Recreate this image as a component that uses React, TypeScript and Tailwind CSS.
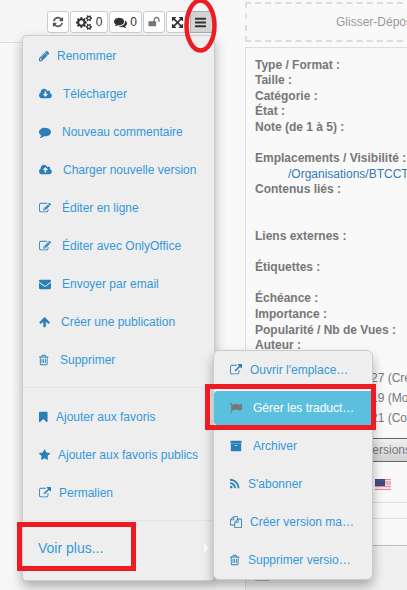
import React from "react";

const CLOUD =
  "zm640 288q0 159-112.5 271.5t-271.5 112.5h-1088q-185 0-316.5-131.5t-131.5-316.5q0-130 70-240t188-165q-2-30-2-43 0-212 150-362t362-150q156 0 285.5 87t188.5 231q71-62 166-62 106 0 181 75t75 181q0 76-41 138 130 31 213.5 135.5t83.5 238.5z";

const SMALL_COG =
  "v140q0 16-149 31-12 27-30 52 51 113 51 138 0 4-4 7-122 71-124 71-8 0-46-47t-52-68q-20 2-30 2t-30-2q-14 21-52 68t-46 47q-2 0-124-71-4-3-4-7 0-25 51-138-18-25-30-52-149-15-149-31v-140q0-16 149-31 13-29 30-52-51-113-51-138 0-4 4-7 4-2 35-20t59-34 30-16q8 0 46 46.5t52 67.5q20-2 30-2t30 2q51-71 92-112l6-2q4 0 124 70 4 3 4 7 0 25-51 138 17 23 30 52 149 15 149 31z";

const PATHS = {
  cogs:
    "M896 896q0-106-75-181t-181-75-181 75-75 181 75 181 181 75 181-75 75-181zm768 512q0-52-38-90t-90-38-90 38-38 90q0 53 37.5 90.5t90.5 37.5 90.5-37.5 37.5-90.5zm0-1024q0-52-38-90t-90-38-90 38-38 90q0 53 37.5 90.5t90.5 37.5 90.5-37.5 37.5-90.5zm-384 421v185q0 10-7 19.5t-16 10.5l-155 24q-11 35-32 76 34 48 90 115 7 11 7 20 0 12-7 19-23 30-82.5 89.5t-78.5 59.5q-11 0-21-7l-115-90q-37 19-77 31-11 108-23 155-7 24-30 24h-186q-11 0-20-7.5t-10-17.5l-23-153q-34-10-75-31l-118 89q-7 7-20 7-11 0-21-8-144-133-144-160 0-9 7-19 10-14 41-53t47-61q-23-44-35-82l-152-24q-10-1-17-9.5t-7-19.5v-185q0-10 7-19.5t16-10.5l155-24q11-35 32-76-34-48-90-115-7-11-7-20 0-12 7-20 22-30 82-89t79-59q11 0 21 7l115 90q34-18 77-32 11-108 23-154 7-24 30-24h186q11 0 20 7.5t10 17.5l23 153q34 10 75 31l118-89q8-7 20-7 11 0 21 8 144 133 144 160 0 8-7 19-12 16-42 54t-45 60q23 48 34 82l152 23q10 2 17 10.5t7 19.5zM1920 1338" +
    SMALL_COG +
    "M1920 314" +
    SMALL_COG,
  pencil:
    "M491 1536l91-91-235-235-91 91v107h128v128h107zm523-928q0-22-22-22-10 0-17 7l-542 542q-7 7-7 17 0 22 22 22 10 0 17-7l542-542q7-7 7-17zm-54-192l416 416-832 832h-416v-416zm683 96q0 53-37 90l-166 166-416-416 166-165q36-38 90-38 53 0 91 38l235 234q37 39 37 91z",
  download:
    "M1280 928q0-14-9-23t-23-9h-224v-352q0-13-9.5-22.5t-22.5-9.5h-192q-13 0-22.5 9.5t-9.5 22.5v352h-224q-13 0-22.5 9.5t-9.5 22.5q0 14 9 23l352 352q9 9 23 9t23-9l351-351q10-12 10-24zM1216 864" +
    CLOUD,
  upload:
    "M1280 864q0-14-9-23l-352-352q-9-9-23-9t-23 9l-351 351q-10 12-10 24 0 14 9 23t23 9h224v352q0 13 9.5 22.5t22.5 9.5h192q13 0 22.5-9.5t9.5-22.5v-352h224q13 0 22.5-9.5t9.5-22.5zM1216 864" +
    CLOUD,
  comment:
    "M1792 896q0 174-120 321.5t-326 233-450 85.5q-70 0-145-8-198 175-460 242-49 14-114 22-17 2-30.5-9t-17.5-29v-1q-3-4-.5-12t2-10 4.5-9.5l6-9 7-8.5 8-9q7-8 31-34.5t34.5-38 31-39.5 32.5-51 27-59 26-76q-157-89-247.5-220t-90.5-281q0-130 71-248.5t191-204.5 286-136.5 348-50.5q244 0 450 85.5t326 233 120 321.5z",
  edit: "M888 1184l116-116-152-152-116 116v56h96v96h56zm440-720q-16-16-33 1l-350 350q-17 17-1 33t33-1l350-350q17-17 1-33zm80 594v190q0 119-84.5 203.5t-203.5 84.5h-832q-119 0-203.5-84.5t-84.5-203.5v-832q0-119 84.5-203.5t203.5-84.5h832q63 0 117 25 15 7 18 23 3 17-9 29l-49 49q-14 14-32 8-23-6-45-6h-832q-66 0-113 47t-47 113v832q0 66 47 113t113 47h832q66 0 113-47t47-113v-126q0-13 9-22l64-64q15-15 35-7t20 29zm-96-738l288 288-672 672h-288v-288zm444 132l-92 92-288-288 92-92q28-28 68-28t68 28l152 152q28 28 28 68t-28 68z",
  envelope:
    "M1792 710v794q0 66-47 113t-113 47h-1472q-66 0-113-47t-47-113v-794q44 49 101 87 362 246 497 345 57 42 92.5 65.5t94.5 48 110 24.5h2q51 0 110-24.5t94.5-48 92.5-65.5q170-123 498-345 57-39 100-87zm0-294q0 79-49 151t-122 123q-376 261-468 325-10 7-42.5 30.5t-54 38-52 32.5-57.5 27-50 9h-2q-23 0-50-9t-57.5-27-52-32.5-54-38-42.5-30.5q-91-64-262-182.5t-205-142.5q-62-42-117-115.5t-55-136.5q0-78 41.5-130t118.5-52h1472q65 0 112.5 47t47.5 113z",
  up: "M1675 971q0 51-37 90l-75 75q-38 38-91 38-54 0-90-38l-294-293v704q0 52-37.5 84.5t-90.5 32.5h-128q-53 0-90.5-32.5t-37.5-84.5v-704l-294 293q-36 38-90 38t-90-38l-75-75q-38-38-38-90 0-53 38-91l651-651q35-37 90-37 54 0 91 37l651 651q37 39 37 91z",
  trash:
    "M704 736v576q0 14-9 23t-23 9h-64q-14 0-23-9t-9-23v-576q0-14 9-23t23-9h64q14 0 23 9t9 23zm256 0v576q0 14-9 23t-23 9h-64q-14 0-23-9t-9-23v-576q0-14 9-23t23-9h64q14 0 23 9t9 23zm256 0v576q0 14-9 23t-23 9h-64q-14 0-23-9t-9-23v-576q0-14 9-23t23-9h64q14 0 23 9t9 23zm128 724v-948h-896v948q0 22 7 40.5t14.5 27 10.5 8.5h832q3 0 10.5-8.5t14.5-27 7-40.5zm-672-1076h448l-48-117q-7-9-17-11h-317q-10 2-17 11zm928 32v64q0 14-9 23t-23 9h-96v948q0 83-47 143.5t-113 60.5h-832q-66 0-113-58.5t-47-141.5v-952h-96q-14 0-23-9t-9-23v-64q0-14 9-23t23-9h309l70-167q15-37 54-63t79-26h320q40 0 79 26t54 63l70 167h309q14 0 23 9t9 23z",
  bookmark:
    "M1420 128q23 0 44 9 33 13 52.5 41t19.5 62v1289q0 34-19.5 62t-52.5 41q-19 8-44 8-48 0-83-32l-441-424-441 424q-36 33-83 33-23 0-44-9-33-13-52.5-41t-19.5-62v-1289q0-34 19.5-62t52.5-41q21-9 44-9h1048z",
  star: "M1728 647q0 22-26 48l-363 354 86 500q1 7 1 20 0 21-10.5 35.5t-30.5 14.5q-19 0-40-12l-449-236-449 236q-22 12-40 12-21 0-31.5-14.5t-10.5-35.5q0-6 2-20l86-500-364-354q-25-27-25-48 0-37 56-46l502-73 225-455q19-41 49-41t49 41l225 455 502 73q56 9 56 46z",
  external:
    "M1408 928v320q0 119-84.5 203.5t-203.5 84.5h-832q-119 0-203.5-84.5t-84.5-203.5v-832q0-119 84.5-203.5t203.5-84.5h704q14 0 23 9t9 23v64q0 14-9 23t-23 9h-704q-66 0-113 47t-47 113v832q0 66 47 113t113 47h832q66 0 113-47t47-113v-320q0-14 9-23t23-9h64q14 0 23 9t9 23zm384-864v512q0 26-19 45t-45 19-45-19l-176-176-652 652q-10 10-23 10t-23-10l-114-114q-10-10-10-23t10-23l652-652-176-176q-19-19-19-45t19-45 45-19h512q26 0 45 19t19 45z",
  flag: "M320 256q0 72-64 110v1266q0 13-9.5 22.5t-22.5 9.5h-64q-13 0-22.5-9.5t-9.5-22.5v-1266q-64-38-64-110 0-53 37.5-90.5t90.5-37.5 90.5 37.5 37.5 90.5zm1472 64v763q0 25-12.5 38.5t-39.5 27.5q-215 116-369 116-61 0-123.5-22t-108.5-48-115.5-48-142.5-22q-192 0-464 146-17 9-33 9-26 0-45-19t-19-45v-742q0-32 31-55 21-14 79-43 236-120 421-120 107 0 200 29t219 88q38 19 88 19 54 0 117.5-21t110-47 88-47 54.5-21q26 0 45 19t19 45z",
  archive:
    "M1088 832q0-26-19-45t-45-19h-256q-26 0-45 19t-19 45 19 45 45 19h256q26 0 45-19t19-45zm576-192v960q0 26-19 45t-45 19h-1408q-26 0-45-19t-19-45v-960q0-26 19-45t45-19h1408q26 0 45 19t19 45zm64-448v256q0 26-19 45t-45 19h-1536q-26 0-45-19t-19-45v-256q0-26 19-45t45-19h1536q26 0 45 19t19 45z",
  rss: "M576 1344q0 80-56 136t-136 56-136-56-56-136 56-136 136-56 136 56 56 136zm512 123q2 28-17 48-18 21-47 21h-135q-25 0-43-16.5t-20-41.5q-22-229-184.5-391.5t-391.5-184.5q-25-2-41.5-20t-16.5-43v-135q0-29 21-47 17-17 43-17h5q160 13 306 80.5t259 181.5q114 113 181.5 259t80.5 306zm512 2q2 27-18 47-18 20-46 20h-143q-26 0-44.5-17.5t-19.5-42.5q-12-215-101-408.5t-231.5-336-336-231.5-408.5-102q-25-1-42.5-19.5t-17.5-43.5v-143q0-28 20-46 18-18 44-18h3q262 13 501.5 120t425.5 294q187 186 294 425.5t120 501.5z",
  files:
    "M1696 384q40 0 68 28t28 68v1216q0 40-28 68t-68 28h-960q-40 0-68-28t-28-68v-288h-544q-40 0-68-28t-28-68v-672q0-40 20-88t48-76l408-408q28-28 76-48t88-20h416q40 0 68 28t28 68v328q68-40 128-40h416zm-544 213l-299 299h299v-299zm-640-384l-299 299h299v-299zm196 647l316-316v-416h-384v416q0 40-28 68t-68 28h-416v640h512v-256q0-40 20-88t48-76zm956 804v-1152h-384v416q0 40-28 68t-68 28h-416v640h896z",
  refresh:
    "M1639 1056q0 5-1 7-64 268-268 434.5t-478 166.5q-146 0-282.5-55t-243.5-157l-129 129q-19 19-45 19t-45-19-19-45v-448q0-26 19-45t45-19h448q26 0 45 19t19 45-19 45l-137 137q71 66 161 102t187 36q134 0 250-65t186-179q11-17 53-117 8-23 30-23h192q13 0 22.5 9.5t9.5 22.5zm25-800v448q0 26-19 45t-45 19h-448q-26 0-45-19t-19-45 19-45l138-138q-148-137-349-137-134 0-250 65t-186 179q-11 17-53 117-8 23-30 23h-199q-13 0-22.5-9.5t-9.5-22.5v-7q65-268 270-434.5t480-166.5q146 0 284 55.5t245 156.5l130-129q19-19 45-19t45 19 19 45z",
  comments:
    "M1408 768q0 139-94 257t-256.5 186.5-353.5 68.5q-86 0-176-16-124 88-278 128-36 9-86 16h-3q-11 0-20.5-8t-11.5-21q-1-3-1-6.5t.5-6.5 2-6l2.5-5 3.5-5.5 4-5 4.5-5 4-4.5q5-6 23-25t26-29.5 22.5-29 25-38.5 20.5-44q-124-72-195-177t-71-224q0-139 94-257t256.5-186.5 353.5-68.5 353.5 68.5 256.5 186.5 94 257zm384 256q0 120-71 224.5t-195 176.5q10 24 20.5 44t25 38.5 22.5 29 26 29.5 23 25q1 1 4 4.5t4.5 5 4 5 3.5 5.5l2.5 5 2 6 .5 6.5-1 6.5q-3 14-13 22t-22 7q-50-7-86-16-154-40-278-128-90 16-176 16-271 0-472-132 58 4 88 4 161 0 309-45t264-129q125-92 192-212t67-254q0-77-23-152 129 71 204 178t75 230z",
  unlock:
    "M1728 576v256q0 26-19 45t-45 19h-64q-26 0-45-19t-19-45v-256q0-106-75-181t-181-75-181 75-75 181v192h96q40 0 68 28t28 68v576q0 40-28 68t-68 28h-960q-40 0-68-28t-28-68v-576q0-40 28-68t68-28h672v-192q0-185 131.5-316.5t316.5-131.5 316.5 131.5 131.5 316.5z",
  expand:
    "M1411 541l-355 355 355 355 144-144q29-31 70-14 39 17 39 59v448q0 26-19 45t-45 19h-448q-42 0-59-40-17-39 14-69l144-144-355-355-355 355 144 144q31 30 14 69-17 40-59 40h-448q-26 0-45-19t-19-45v-448q0-42 40-59 39-17 69 14l144 144 355-355-355-355-144 144q-19 19-45 19-12 0-24-5-40-17-40-59v-448q0-26 19-45t45-19h448q42 0 59 40 17 39-14 69l-144 144 355 355 355-355-144-144q-31-30-14-69 17-40 59-40h448q26 0 45 19t19 45v448q0 42-39 59-13 5-25 5-26 0-45-19z",
  bars: "M1664 1344v128q0 26-19 45t-45 19h-1408q-26 0-45-19t-19-45v-128q0-26 19-45t45-19h1408q26 0 45 19t19 45zm0-512v128q0 26-19 45t-45 19h-1408q-26 0-45-19t-19-45v-128q0-26 19-45t45-19h1408q26 0 45 19t19 45zm0-512v128q0 26-19 45t-45 19h-1408q-26 0-45-19t-19-45v-128q0-26 19-45t45-19h1408q26 0 45 19t19 45z",
};

type IconName = keyof typeof PATHS;

// Horizontal origin and width of each glyph inside the 1792-unit em box.
const BOXES: Partial<Record<IconName, [number, number]>> = {
  cogs: [0, 1920],
  pencil: [128, 1536],
  download: [-64, 1920],
  upload: [-64, 1920],
  up: [64, 1664],
  trash: [192, 1408],
  bookmark: [256, 1280],
  star: [64, 1664],
  rss: [192, 1408],
};

function Icon({ name, size = 12 }: { name: IconName; size?: number }) {
  const [x, w] = BOXES[name] ?? [0, 1792];
  return (
    <svg
      className="block shrink-0 overflow-visible"
      width={(w / 1792) * size}
      height={size}
      viewBox={`${x} 0 ${w} 1792`}
      fill="currentColor"
      fillRule={name === "download" || name === "upload" ? "evenodd" : "nonzero"}
    >
      <path d={PATHS[name]} />
    </svg>
  );
}

interface Entry {
  icon: IconName;
  label: string;
  slot: string;
}

const actions: Entry[] = [
  { icon: "pencil", label: "Renommer", slot: "w-[18px]" },
  { icon: "download", label: "Télécharger", slot: "w-6" },
  { icon: "comment", label: "Nouveau commentaire", slot: "w-[23px]" },
  { icon: "upload", label: "Charger nouvelle version", slot: "w-6" },
  { icon: "edit", label: "Éditer en ligne", slot: "w-[23px]" },
  { icon: "edit", label: "Éditer avec OnlyOffice", slot: "w-[23px]" },
  { icon: "envelope", label: "Envoyer par email", slot: "w-[23px]" },
  { icon: "up", label: "Créer une publication", slot: "w-[22px]" },
  { icon: "trash", label: "Supprimer", slot: "w-[21px]" },
];

const bookmarks: Entry[] = [
  { icon: "bookmark", label: "Ajouter aux favoris", slot: "w-[17px]" },
  { icon: "star", label: "Ajouter aux favoris publics", slot: "w-[19px]" },
  { icon: "external", label: "Permalien", slot: "w-5" },
];

const more: Entry[] = [
  { icon: "external", label: "Ouvrir l'emplace…", slot: "w-5" },
  { icon: "flag", label: "Gérer les traduct…", slot: "w-[23px]" },
  { icon: "archive", label: "Archiver", slot: "w-[23px]" },
  { icon: "rss", label: "S'abonner", slot: "w-[18px]" },
  { icon: "files", label: "Créer version ma…", slot: "w-5" },
  { icon: "trash", label: "Supprimer versio…", slot: "w-[18px]" },
];

function Menu({ entries, active }: { entries: Entry[]; active?: IconName }) {
  return (
    <ul className="flex flex-col gap-1 py-0.5">
      {entries.map(({ icon, label, slot }) => (
        <li
          key={label}
          className={
            icon === active
              ? "flex h-[34px] items-center rounded-l bg-[#5bc0de] pl-4 text-white"
              : "flex h-[34px] items-center pl-4 text-[#3498db]"
          }
        >
          <span className={`${slot} shrink-0 ${icon === active ? "text-[#777]" : "text-[#2980b9]"}`}>
            <Icon name={icon} />
          </span>
          <span className="whitespace-nowrap">{label}</span>
        </li>
      ))}
    </ul>
  );
}

const BTN = "flex h-[22px] items-center justify-center rounded-[3px] border border-[#ccc] bg-white";

function Toolbar() {
  return (
    <div className="flex h-[43px] gap-px border-b border-[#ddd] bg-[#f5f5f5] pt-[11px] pl-[47px] text-[#333]">
      <button className={`${BTN} w-[22px] text-[#555]`}>
        <Icon name="refresh" />
      </button>
      <button className={`${BTN} w-[38px] gap-1`}>
        <Icon name="cogs" size={15} />
        <span>0</span>
      </button>
      <button className={`${BTN} w-[33px] gap-[3px]`}>
        <Icon name="comments" size={13} />
        <span>0</span>
      </button>
      <button className={`${BTN} w-[22px] text-[#777]`}>
        <Icon name="unlock" />
      </button>
      <button className={`${BTN} w-[23px]`}>
        <Icon name="expand" size={13} />
      </button>
      <button className="flex h-[22px] w-6 items-center justify-center border border-[#adadad] bg-[#d4d4d4] pr-1">
        <Icon name="bars" size={13} />
      </button>
    </div>
  );
}

const fields = [
  "Type / Format :",
  "Taille :",
  "Catégorie :",
  "État :",
  "Note (de 1 à 5) :",
  "",
  "Emplacements / Visibilité :",
  "/Organisations/BTCCT",
  "Contenus liés :",
  "",
  "",
  "Liens externes :",
  "",
  "Étiquettes :",
  "",
  "Échéance :",
  "Importance :",
  "Popularité / Nb de Vues :",
  "Auteur :",
];

function UsFlag() {
  return (
    <svg width="16" height="11" viewBox="0 0 16 11" className="block">
      <rect width="16" height="11" fill="#f7dfe2" />
      <path d="M0 .5h16M0 3h16M0 5h16M0 7.5h16M0 10.5h16" stroke="#dd8c96" strokeWidth="1" />
      <rect width="10" height="7" fill="#3c4a7c" />
      <path d="M1 1.5h8M1 3.5h8M1 5.5h8" stroke="#5a6693" strokeWidth=".6" strokeDasharray="1 1" />
    </svg>
  );
}

function Details() {
  return (
    <section className="flex h-[590px] w-[162px] shrink-0 flex-col overflow-hidden text-[#777]">
      <div className="mt-0.5 flex h-10 w-[300px] shrink-0 items-center border-2 border-dashed border-[#ddd] pl-[89px] text-[#999]">
        Glisser-Dépos
      </div>
      <div className="mt-[5px] flex grow flex-col border-t border-l border-[#ddd]">
        <div className="h-[310px] shrink-0 pt-[9.5px] pl-[9px]">
          {fields.map((text, i) =>
            text.startsWith("/") ? (
              <div key={i} className="h-[15.6px] pl-[33px] leading-[15.6px] whitespace-nowrap text-[#337ab7]">
                {text}
              </div>
            ) : (
              <div key={i} className="h-[15.6px] leading-[15.6px] font-bold whitespace-nowrap">
                {text}
              </div>
            ),
          )}
        </div>
        <div className="shrink-0 pt-[10px] pl-[125px] leading-5 whitespace-nowrap">
          <div>27 (Cré</div>
          <div>19 (Mod</div>
          <div>21 (Con</div>
        </div>
        <div className="mt-[10px] flex h-6 shrink-0 items-center border-y border-[#666] bg-gradient-to-b from-[#f0f0f0] to-[#d2d2d2] pl-[119px]">
          Versions
        </div>
        <div className="flex h-[41px] shrink-0 items-start border-b border-[#ddd] pt-[17px] pl-[129px]">
          <UsFlag />
        </div>
        <div className="h-4 shrink-0 border-b border-[#ddd]" />
        <div className="h-[27px] shrink-0 border-b border-[#bbb]" />
        <div className="grow bg-[#f0f0f0] pt-8 pl-[9px]">
          <div className="h-[3px] w-[14px] rounded-t-full bg-[#bbb]" />
        </div>
      </div>
    </section>
  );
}

export default function App() {
  return (
    <main className="relative flex h-[590px] w-[407px] overflow-hidden bg-[#f9f9f9] font-['Liberation_Sans',Arial,sans-serif] text-xs">
      <div className="w-[215px] shrink-0 border-r border-[#f3f3f3] bg-[#f7f7f7]">
        <Toolbar />
      </div>
      <div className="w-[30px] shrink-0" />
      <Details />

      <div className="absolute top-[35px] left-[22px] h-[546px] w-[193px] rounded border border-[#ccc] bg-[#eee] pt-px shadow-[0_6px_12px_rgba(0,0,0,0.3)]">
        <Menu entries={actions} />
        <hr className="mt-2 mb-2.5 border-[#e3e3e3]" />
        <Menu entries={bookmarks} />
        <hr className="mt-2 border-[#e3e3e3]" />
        <div className="mt-2.5 flex h-[34px] items-center justify-between pr-[5px] pl-[15px] text-sm text-[#3498db]">
          Voir plus...
          <span className="size-0 border-y-5 border-l-5 border-y-transparent border-l-white" />
        </div>
      </div>

      <div className="absolute top-[350px] left-[213px] h-[230px] w-[160px] rounded-md border border-[#ccc] bg-[#eee] shadow-[0_6px_12px_rgba(0,0,0,0.3)]">
        <Menu entries={more} active="flag" />
      </div>

      <div className="absolute top-[384px] left-[205px] h-[46px] w-[171px] border-5 border-[#ed1c24]" />
      <div className="absolute top-[522px] left-[17px] h-[49px] w-[119px] border-5 border-[#ed1c24]" />
      <svg className="absolute top-0 left-[184px]" width="34" height="54">
        <ellipse cx="16.5" cy="25.5" rx="14" ry="25" fill="none" stroke="#ed1c24" strokeWidth="4.5" />
      </svg>
    </main>
  );
}
